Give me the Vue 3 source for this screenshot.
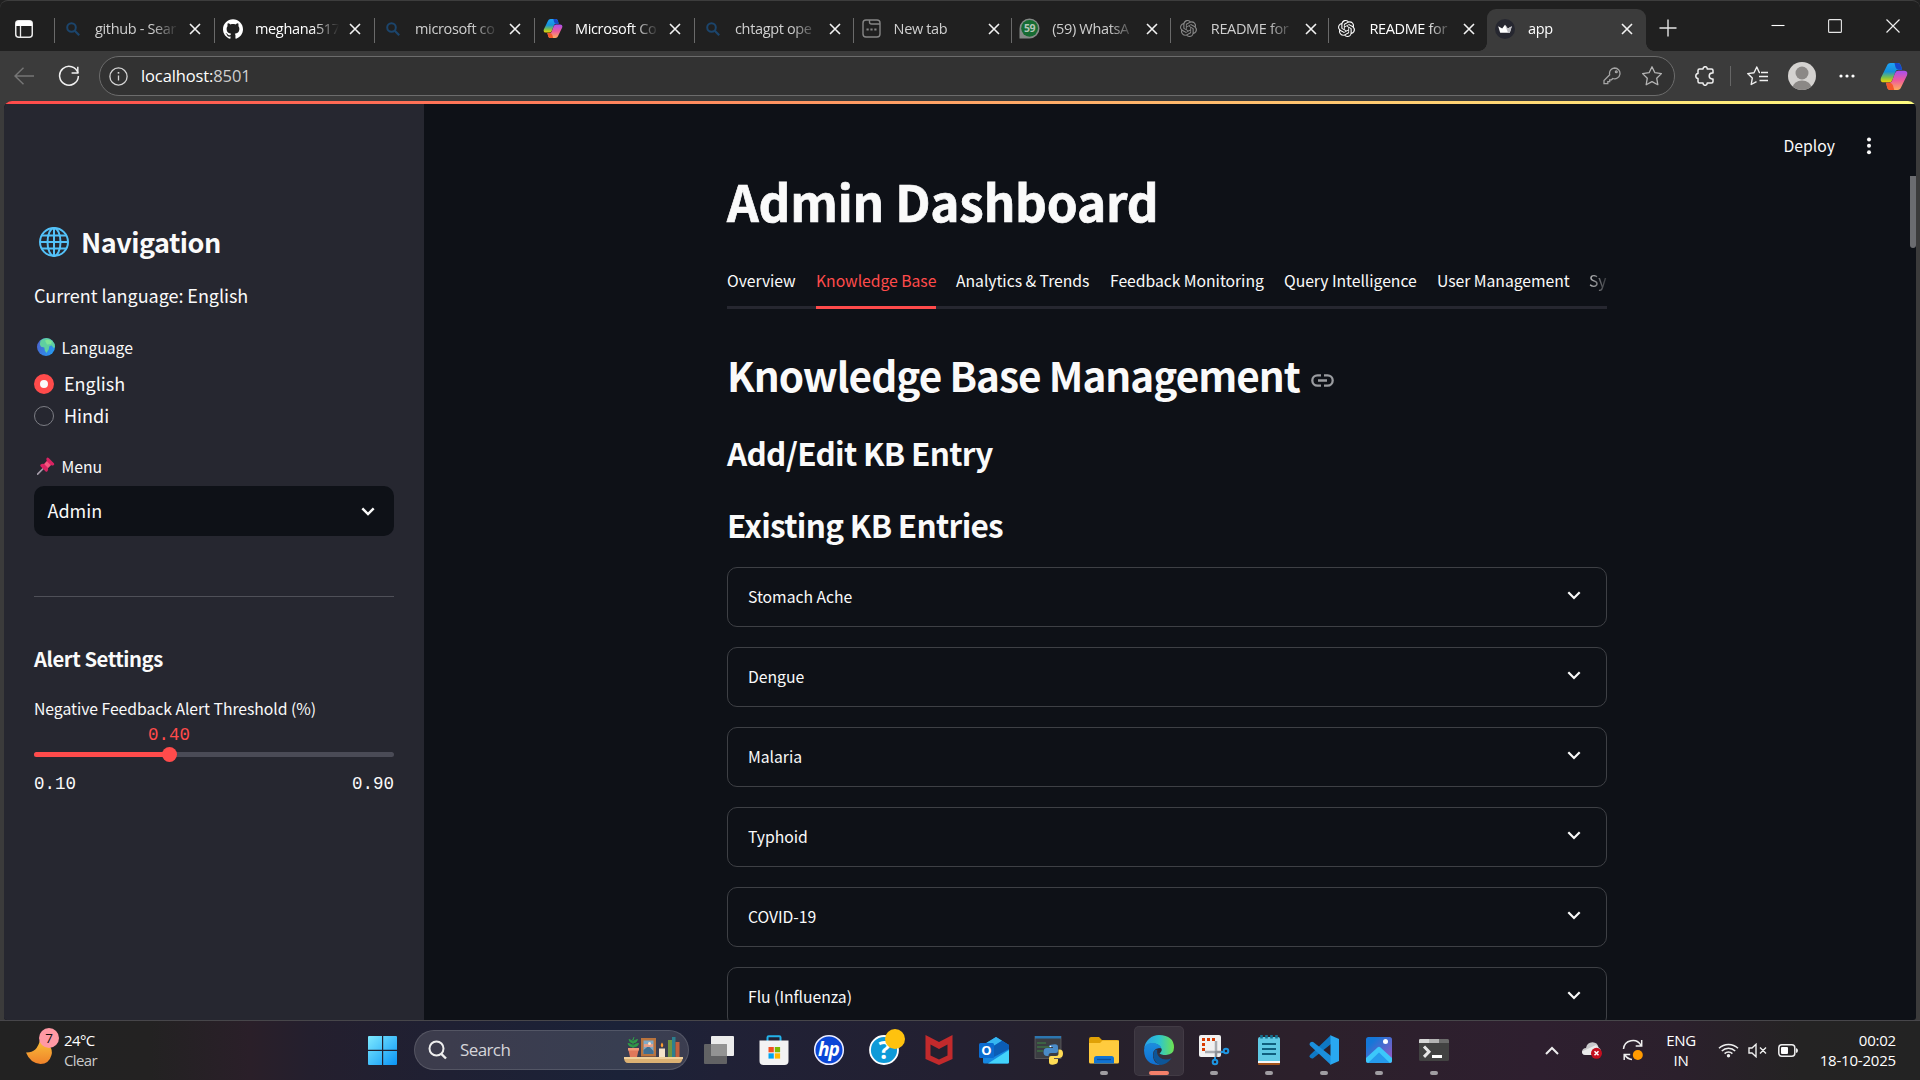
<script setup>
const tabs = [
  { icon: 'search', title: 'github - Sear' },
  { icon: 'github', title: 'meghana517', bright: true },
  { icon: 'search', title: 'microsoft co' },
  { icon: 'copilot', title: 'Microsoft Co', bright: true },
  { icon: 'search', title: 'chtagpt ope' },
  { icon: 'newtab', title: 'New tab' },
  { icon: 'whatsapp', title: '(59) WhatsA' },
  { icon: 'openai', title: 'README for', dim: true },
  { icon: 'openai', title: 'README for', bright: true },
  { icon: 'crown', title: 'app', bright: true, active: true },
]

const pageTabs = [
  { label: 'Overview', width: 69 },
  { label: 'Knowledge Base', width: 120, active: true },
  { label: 'Analytics & Trends', width: 134 },
  { label: 'Feedback Monitoring', width: 154 },
  { label: 'Query Intelligence', width: 133 },
  { label: 'User Management', width: 132 },
  { label: 'Sy', width: 18, faded: true },
]

const entries = ['Stomach Ache', 'Dengue', 'Malaria', 'Typhoid', 'COVID-19', 'Flu (Influenza)']

const apps = [
  { id: 'taskview' },
  { id: 'store' },
  { id: 'hp' },
  { id: 'help' },
  { id: 'mcafee' },
  { id: 'outlook' },
  { id: 'python' },
  { id: 'folder', running: true },
  { id: 'edge', running: true, active: true },
  { id: 'snip', running: true },
  { id: 'notepad', running: true },
  { id: 'vscode', running: true },
  { id: 'photos', running: true },
  { id: 'terminal', running: true },
]

const slider = { min: 0.1, max: 0.9, value: 0.4 }
const percent = ((slider.value - slider.min) / (slider.max - slider.min)) * 100
</script>

<template>
  <div class="screen">
    <svg class="defs" width="0" height="0">
      <defs>
        <linearGradient id="cpA" x1="0" y1="0" x2="0" y2="1">
          <stop offset="0" stop-color="#1fa3f5" /><stop offset=".45" stop-color="#1590dc" />
          <stop offset=".75" stop-color="#7cc04b" /><stop offset="1" stop-color="#f5d400" />
        </linearGradient>
        <linearGradient id="cpB" x1="0" y1="0" x2="0" y2="1">
          <stop offset="0" stop-color="#a64ff0" /><stop offset=".5" stop-color="#ee5a9b" /><stop offset="1" stop-color="#ffae5c" />
        </linearGradient>
        <linearGradient id="winG" x1="0" y1="0" x2="1" y2="1">
          <stop offset="0" stop-color="#7eeaff" /><stop offset="1" stop-color="#0a94f5" />
        </linearGradient>
        <symbol id="copilot" viewBox="0 0 28 28">
          <path d="M6.500 3Q7.500 0 10.500 0H18q2.500 0 3.300 3l1 4h-3.800q-2.500 0-3.200 2.500L12.500 17Q11.500 20 9 20H3.500Q-1 20 .6 15z" fill="url(#cpA)" />
          <path d="M14.500 0H18q2.500 0 3.300 3l1.200 4h-4Q16.500 7 15.600 4.500z" fill="#1746c9" />
          <path d="M21.500 25Q20.500 28 17.500 28H10q-2.500 0-3.200-3L5.800 20.500H9.500q2 0 2.800-2.500L15 10.500Q16 8 18.500 8h6Q29 8 27.400 13z" fill="url(#cpB)" />
          <path d="M5.800 20.500H9q3 0 4 3.200l1.300 4.300H10q-2.500 0-3.200-3z" fill="#f4572b" />
        </symbol>
        <symbol id="openai" viewBox="0 0 24 24">
          <path fill="currentColor" d="M22.2819 9.8211a5.9847 5.9847 0 0 0-.5157-4.9108 6.0462 6.0462 0 0 0-6.5098-2.9A6.0651 6.0651 0 0 0 4.9807 4.1818a5.9847 5.9847 0 0 0-3.9977 2.9 6.0462 6.0462 0 0 0 .7427 7.0966 5.98 5.98 0 0 0 .511 4.9107 6.051 6.051 0 0 0 6.5146 2.9001A5.9847 5.9847 0 0 0 13.2599 24a6.0557 6.0557 0 0 0 5.7718-4.2058 5.9894 5.9894 0 0 0 3.9977-2.9001 6.0557 6.0557 0 0 0-.7475-7.0729zm-9.022 12.6081a4.4755 4.4755 0 0 1-2.8764-1.0408l.1419-.0804 4.7783-2.7582a.7948.7948 0 0 0 .3927-.6813v-6.7369l2.02 1.1686a.071.071 0 0 1 .038.052v5.5826a4.504 4.504 0 0 1-4.4945 4.4944zm-9.6607-4.1254a4.4708 4.4708 0 0 1-.5346-3.0137l.142.0852 4.783 2.7582a.7712.7712 0 0 0 .7806 0l5.8428-3.3685v2.3324a.0804.0804 0 0 1-.0332.0615L9.74 19.9502a4.4992 4.4992 0 0 1-6.1408-1.6464zM2.3408 7.8956a4.485 4.485 0 0 1 2.3655-1.9728V11.6a.7664.7664 0 0 0 .3879.6765l5.8144 3.3543-2.0201 1.1685a.0757.0757 0 0 1-.071 0l-4.8303-2.7865A4.504 4.504 0 0 1 2.3408 7.872zm16.5963 3.8558L13.1038 8.364 15.1192 7.2a.0757.0757 0 0 1 .071 0l4.8303 2.7913a4.4944 4.4944 0 0 1-.6765 8.1042v-5.6772a.79.79 0 0 0-.407-.667zm2.0107-3.0231l-.142-.0852-4.7735-2.7818a.7759.7759 0 0 0-.7854 0L9.409 9.2297V6.8974a.0662.0662 0 0 1 .0284-.0615l4.8303-2.7866a4.4992 4.4992 0 0 1 6.6802 4.66zM8.3065 12.863l-2.02-1.1638a.0804.0804 0 0 1-.038-.0567V6.0742a4.4992 4.4992 0 0 1 7.3757-3.4537l-.142.0805L8.704 5.459a.7948.7948 0 0 0-.3927.6813zm1.0976-2.3654l2.602-1.4998 2.6069 1.4998v2.9994l-2.5974 1.4997-2.6067-1.4997Z" />
        </symbol>
      </defs>
    </svg>

    <div class="tabstrip">
      <div class="tab-actions">
        <svg width="18" height="18" viewBox="0 0 18 18"><rect x=".75" y=".75" width="16.500" height="16.500" rx="3" fill="none" stroke="#e8e8e8" stroke-width="1.500" /><path d="M1 3q0-2 2-2h12q2 0 2 2v3H1z" fill="#fff" /><path d="M5.500 6v11" stroke="#e8e8e8" stroke-width="1.300" /></svg>
      </div>
      <div v-for="(t, i) in tabs" :key="i" class="tab" :class="{ active: t.active, bright: t.bright, dim: t.dim }">
        <span class="fav">
          <svg v-if="t.icon === 'search'" width="14" height="14" viewBox="0 0 14 14"><circle cx="5.500" cy="5.500" r="4.300" fill="none" stroke="#1c456c" stroke-width="2" /><path d="M8.700 8.700l4.500 4.500" stroke="#1c456c" stroke-width="2.200" /></svg>
          <svg v-else-if="t.icon === 'github'" width="20" height="20" viewBox="0 0 24 24"><path fill="#fff" d="M12 .297c-6.630 0-12 5.373-12 12 0 5.303 3.438 9.800 8.205 11.385.6.113.82-.258.82-.577 0-.285-.01-1.040-.015-2.040-3.338.724-4.042-1.610-4.042-1.610C4.422 18.070 3.633 17.700 3.633 17.700c-1.087-.744.084-.729.084-.729 1.205.084 1.838 1.236 1.838 1.236 1.070 1.835 2.809 1.305 3.495.998.108-.776.417-1.305.76-1.605-2.665-.3-5.466-1.332-5.466-5.930 0-1.310.465-2.380 1.235-3.220-.135-.303-.54-1.523.105-3.176 0 0 1.005-.322 3.300 1.230.96-.267 1.980-.399 3-.405 1.020.006 2.040.138 3 .405 2.280-1.552 3.285-1.230 3.285-1.230.645 1.653.24 2.873.12 3.176.765.84 1.230 1.910 1.230 3.220 0 4.610-2.805 5.625-5.475 5.920.42.36.81 1.096.81 2.220 0 1.606-.015 2.896-.015 3.286 0 .315.21.69.825.57C20.565 22.092 24 17.592 24 12.297c0-6.627-5.373-12-12-12" /></svg>
          <svg v-else-if="t.icon === 'copilot'" width="20" height="19"><use href="#copilot" /></svg>
          <svg v-else-if="t.icon === 'newtab'" width="19" height="19" viewBox="0 0 19 19" fill="none" stroke="#858585" stroke-width="1.400"><rect x="1" y="1" width="17" height="17" rx="3" /><path d="M7.500 1v2q0 2 2 2H18" /><path d="M4.500 10.500h2.200M8.400 10.500h2.200M12.300 10.500h2.200" stroke-width="2" /></svg>
          <svg v-else-if="t.icon === 'whatsapp'" width="21" height="21" viewBox="0 0 21 21"><path d="M.5 20.500V10.500A10 10 0 1 1 10.500 20.500z" fill="#858a87" /><circle cx="10.600" cy="10.300" r="8.400" fill="#166b32" /><text x="10.600" y="14.200" text-anchor="middle" class="badge59">59</text></svg>
          <svg v-else-if="t.icon === 'openai'" width="17" height="17" class="ai"><use href="#openai" /></svg>
          <svg v-else width="20" height="20" viewBox="0 0 20 20"><circle cx="10" cy="10" r="10" fill="#262730" /><path d="M3.200 7.200l4 2.300L10 5.800l2.800 3.700 4-2.300-2 6.600H5.200z" fill="#fff" /><path d="M10 5.800l2.800 3.700 4-2.300-2 6.600H13z" fill="#bfbfc4" /></svg>
        </span>
        <span class="tab-title">{{ t.title }}</span>
        <svg class="tab-x" width="12" height="12" viewBox="0 0 12 12"><path d="M1 1l10 10M11 1L1 11" stroke="#f2f2f2" stroke-width="1.600" /></svg>
      </div>
      <div class="plus"><svg width="18" height="18" viewBox="0 0 18 18"><path d="M9 .5v17M.5 9h17" stroke="#e4e4e4" stroke-width="1.400" /></svg></div>
      <div class="winctl">
        <svg width="14" height="14" viewBox="0 0 14 14"><path d="M.5 6.500h13" stroke="#fff" stroke-width="1.100" /></svg>
        <svg width="14" height="14" viewBox="0 0 14 14"><rect x=".6" y=".6" width="12.800" height="12.800" rx="1" fill="none" stroke="#e6e6e6" stroke-width="1.100" /></svg>
        <svg width="14" height="14" viewBox="0 0 14 14"><path d="M.5.5l13 13M13.500.5l-13 13" stroke="#eee" stroke-width="1.200" /></svg>
      </div>
    </div>

    <div class="toolbar">
      <svg class="back" width="20" height="18" viewBox="0 0 20 18" fill="none" stroke="#767676" stroke-width="1.400"><path d="M20 9H1M9.500.7L1 9l8.500 8.300" /></svg>
      <svg class="reload" width="22" height="22" viewBox="0 0 22 22" fill="none" stroke="#f0f0f0" stroke-width="1.500"><path d="M20 8A9.400 9.400 0 1 0 20.400 11" /><path d="M19.800 1.800V8h-6.200" /></svg>
      <div class="address">
        <svg width="19" height="19" viewBox="0 0 19 19" fill="none" stroke="#d5d5d5" stroke-width="1.300"><circle cx="9.500" cy="9.500" r="8.600" /><path d="M9.500 8.500v5" /><path d="M9.500 5v1.700" stroke-width="1.600" /></svg>
        <span class="url">localhost:<i>8501</i></span>
        <svg width="18" height="18" viewBox="0 0 18 18" fill="none" stroke="#a5a5a5" stroke-width="1.300"><path d="M11.600 1a5.400 5.400 0 1 1-1.800 10.500L8.500 12.800H6.700v1.900H4.800v2H1v-3.200l5.700-5.700A5.400 5.400 0 0 1 11.600 1z" /><circle cx="13.300" cy="4.800" r=".9" /></svg>
        <svg class="star" width="20" height="20" viewBox="0 0 20 20" fill="none" stroke="#b5b5b5" stroke-width="1.300" stroke-linejoin="round"><path d="M10 .8l2.900 5.900 6.500.9-4.700 4.600 1.100 6.500L10 15.600l-5.800 3.100 1.100-6.500L.6 7.600l6.500-.9z" /></svg>
      </div>
      <div class="tools">
        <svg width="20" height="20" viewBox="0 0 20 20" fill="none" stroke="#f0f0f0" stroke-width="1.500" stroke-linejoin="round"><path d="M4.500 3H8q0-2.300 2.100-2.300T12.200 3h4.300q1.500 0 1.500 1.500V7h-1q-2.800.3-2.800 3t2.800 3h1v2.500q0 1.500-1.500 1.500h-4.300q0 2.300-2.100 2.300T8 17H4.500Q3 17 3 15.500v-3Q.8 12.300.8 10T3 7.500v-3Q3 3 4.500 3z" /></svg>
        <i class="vsep"></i>
        <svg class="favs" width="21" height="20" viewBox="0 0 21 20" fill="none" stroke="#f0f0f0" stroke-width="1.400" stroke-linejoin="round"><path d="M13 6.500h-.7L9.800 1 7 6.700l-6.300.9 4.600 4.500-1.100 6.400 5.300-2.900" /><path d="M14 6.500h7M12 10.500h9M12.500 14.500h8.500" /></svg>
        <svg class="avatar" width="28" height="28" viewBox="0 0 28 28"><defs><clipPath id="av"><circle cx="14" cy="14" r="14" /></clipPath></defs><g clip-path="url(#av)"><rect width="28" height="28" fill="#d4d2d0" /><circle cx="14" cy="11" r="6.500" fill="#8b8886" /><ellipse cx="14" cy="26" rx="9.500" ry="7.500" fill="#8b8886" /></g></svg>
        <svg class="more" width="16" height="4" viewBox="0 0 16 4" fill="#fff"><circle cx="2" cy="2" r="1.600" /><circle cx="8" cy="2" r="1.600" /><circle cx="14" cy="2" r="1.600" /></svg>
        <svg class="cp" width="28" height="27"><use href="#copilot" /></svg>
      </div>
    </div>

    <div class="page-frame">
      <div class="page">
        <div class="rainbow"></div>
        <div class="columns">
          <aside class="sidebar">
            <h2 class="nav-title">
              <svg width="40" height="32" viewBox="0 0 40 32" fill="none" stroke="#53c1f8" stroke-width="2"><circle cx="20" cy="16" r="14" /><ellipse cx="20" cy="16" rx="6.500" ry="14" /><path d="M20 2v28M6 16h28M8 9.500h24M8 22.500h24" /></svg>
              <span>Navigation</span>
            </h2>
            <p class="current">Current language: English</p>
            <div class="label lang">
              <svg width="18" height="18" viewBox="0 0 18 18"><defs><linearGradient id="sea" x1="0" y1=".3" x2="1" y2=".8"><stop offset="0" stop-color="#4a63cf" /><stop offset="1" stop-color="#249df2" /></linearGradient></defs><circle cx="9" cy="9" r="9" fill="url(#sea)" /><path d="M3.500 2.600Q6 0 9.500 0q3.500.2 5.800 2.600Q18 5.500 18 9l-1.500 1-1.700-2.500-2.300.5-.8 3.500L9.500 15l-1.600-2.200L7.300 9.500 4 8.800 2.800 6.500z" fill="#5fd0a0" /><path d="M8 2.500l3-1 4 2-1 2.500-4 .5z" fill="#7fe596" /></svg>
              <span>Language</span>
            </div>
            <div class="radio"><i class="dot on"></i><span>English</span></div>
            <div class="radio"><i class="dot"></i><span>Hindi</span></div>
            <div class="label menu">
              <svg width="18" height="18" viewBox="0 0 18 18"><path d="M.6 17.200L7.200 10.500" stroke="#a49ba8" stroke-width="1.700" stroke-linecap="round" /><path d="M9.500 1.200q1-1.200 2.200-.2l5.200 5.200q1 1.200-.3 2-1.600.6-2.900-.1L11 11q.6 2.200-.8 3.600-.8.500-1.600-.2L3.500 9.200q-.7-1 .2-1.700 1.500-1.200 3.500-.6l2.700-2.800q-.9-1.600-.4-2.900z" fill="#d92362" /><path d="M9.800 4.200l4 4L11 11 7.200 7z" fill="#f4567e" /></svg>
              <span>Menu</span>
            </div>
            <div class="select">
              <span>Admin</span>
              <svg width="14" height="9" viewBox="0 0 14 9" fill="none" stroke="#fafafa" stroke-width="2.400"><path d="M1.300 1.300L7 7l5.700-5.700" /></svg>
            </div>
            <hr class="rule">
            <h3 class="alert-title">Alert Settings</h3>
            <p class="threshold">Negative Feedback Alert Threshold (%)</p>
            <div class="value-row"><span class="value" :style="{ marginLeft: percent + '%' }">{{ slider.value.toFixed(2) }}</span></div>
            <div class="track"><i class="fill" :style="{ width: percent + '%' }"></i><i class="thumb"></i></div>
            <div class="range"><span>{{ slider.min.toFixed(2) }}</span><span>{{ slider.max.toFixed(2) }}</span></div>
          </aside>

          <main class="main">
            <header class="app-header">
              <span class="deploy">Deploy</span>
              <svg width="6" height="18" viewBox="0 0 6 18" fill="#fafafa"><circle cx="3" cy="2.400" r="2" /><circle cx="3" cy="8.800" r="2" /><circle cx="3" cy="15.200" r="2" /></svg>
            </header>
            <div class="content">
              <h1>Admin Dashboard</h1>
              <nav class="page-tabs">
                <span v-for="p in pageTabs" :key="p.label" class="page-tab" :class="{ active: p.active, faded: p.faded }" :style="{ width: p.width + 'px' }">{{ p.label }}</span>
              </nav>
              <h2 class="kb-title"><span>Knowledge Base Management</span>
                <svg width="23" height="13" viewBox="0 0 23 13" fill="none" stroke="#9a9ca0" stroke-width="2.300"><path d="M10 1.300H6.500a5.200 5.200 0 0 0 0 10.400H10M13 1.300h3.500a5.200 5.200 0 0 1 0 10.400H13M7 6.500h9" /></svg>
              </h2>
              <h3 class="sub add">Add/Edit KB Entry</h3>
              <h3 class="sub existing">Existing KB Entries</h3>
              <div class="list">
                <div v-for="e in entries" :key="e" class="expander">
                  <span>{{ e }}</span>
                  <svg width="14" height="9" viewBox="0 0 14 9" fill="none" stroke="#fafafa" stroke-width="2.200"><path d="M1.300 1.300L7 7l5.700-5.700" /></svg>
                </div>
              </div>
            </div>
            <i class="scroll-thumb"></i>
          </main>
        </div>
      </div>
    </div>

    <footer class="taskbar">
      <div class="weather">
        <div class="moon">
          <svg width="32" height="36" viewBox="0 0 32 36"><defs><linearGradient id="moonG" x1="0" y1="0" x2="0" y2="1"><stop offset="0" stop-color="#f9c03a" /><stop offset="1" stop-color="#f0822a" /></linearGradient></defs><path d="M0 21.500Q11 22 14 9q14 5 11.500 15Q23 33 14.500 33 4 32 0 21.500z" fill="url(#moonG)" /></svg>
          <span class="count">7</span>
        </div>
        <div class="temps"><span>24°C</span><span class="soft">Clear</span></div>
      </div>
      <svg class="start" width="29" height="29" viewBox="0 0 29 29" fill="url(#winG)"><path d="M1 0h13v13.800H0V1q0-1 1-1zM15.200 0H28q1 0 1 1v12.800H15.200zM0 15h14v14H1q-1 0-1-1zM15.200 15H29v13q0 1-1 1H15.200z" /></svg>
      <div class="search">
        <svg width="20" height="20" viewBox="0 0 20 20" fill="none" stroke="#eee" stroke-width="2"><circle cx="8.500" cy="8.500" r="7" /><path d="M13.300 13.800l4.700 4.700" stroke-width="2.400" /></svg>
        <span>Search</span>
        <svg class="shelf" width="59" height="27" viewBox="0 0 59 27">
          <path d="M0 20h59q-1 6-4 6H4q-4 0-4-6z" fill="#dcb173" /><path d="M0 20h59v2H0z" fill="#f0d09a" />
          <path d="M4 11h11l-2 9H6z" fill="#e0785a" /><path d="M4 11h11v2.500H4z" fill="#f09a78" />
          <path d="M9 11V2M9 10Q4.500 9.500 4 6.500q4 0 5 3.500zM9 10q5-.5 5.500-3.500-4.500 0-5.500 3.500zM9 6Q5.500 5.500 5 2.500q3.500.5 4 3.500zM9 6q4-.5 4.500-3.500Q9.500 3 9 6zM9 3l1-3" stroke="#2f9a48" fill="#2f9a48" />
          <rect x="17" y="1" width="15" height="18.500" fill="#b9743e" /><rect x="19.500" y="3.500" width="10" height="13.500" fill="#7faac8" /><path d="M19.500 13l5-4 5 5v3h-10z" fill="#3f6f92" /><path d="M20 7h9v3h-9z" fill="#e4a18c" /><circle cx="25.500" cy="6.500" r="1.500" fill="#ffe3c8" />
          <rect x="35" y="11.500" width="6" height="8.500" fill="#f5e3c8" /><path d="M38 5.500q2.500 3 0 5-2.500-2 0-5z" fill="#ff9f2e" />
          <rect x="44" y="3" width="4" height="17" fill="#6f9440" /><rect x="48" y="0" width="3.500" height="20" fill="#2c7f8e" /><rect x="51.500" y="5" width="4" height="15" fill="#c2603c" />
        </svg>
      </div>
      <div class="apps">
        <div v-for="a in apps" :key="a.id" class="app" :class="{ active: a.active }">
          <svg width="32" height="32" viewBox="0 0 32 32">
            <template v-if="a.id === 'taskview'"><rect x="8" y="2" width="23" height="20" rx="1" fill="#ececec" /><rect x="1" y="10" width="23" height="20" rx="1" fill="#6b6b6b" opacity=".88" /><path d="M8 10h16v12H8z" fill="#9b9b9b" opacity=".75" /></template>
            <template v-else-if="a.id === 'store'"><path d="M9.500 7V3.500q0-1.200 1.200-1.200h10.600q1.200 0 1.200 1.200V7" fill="none" stroke="#23b2ea" stroke-width="2" /><path d="M1.500 6.500h29V27q0 4-4 4h-21q-4 0-4-4z" fill="#f3f3f3" /><path d="M10.500 13h5.300v5.300h-5.300z" fill="#f25022" /><path d="M16.800 13h5.300v5.300h-5.300z" fill="#7fba00" /><path d="M10.500 19.300h5.300v5.300h-5.300z" fill="#00a4ef" /><path d="M16.800 19.300h5.300v5.300h-5.300z" fill="#ffb900" /></template>
            <template v-else-if="a.id === 'hp'"><circle cx="16" cy="16" r="14.300" fill="#0b46d6" stroke="#eef" stroke-width="1.500" /><text x="15.500" y="21.500" text-anchor="middle" class="hp-text">hp</text></template>
            <template v-else-if="a.id === 'help'"><circle cx="16" cy="16" r="14" fill="#0e9ad8" stroke="#fff" stroke-width="1.800" /><text x="16.500" y="25" text-anchor="middle" class="help-text">?</text><circle cx="27" cy="5" r="10" fill="#ffc20e" /></template>
            <template v-else-if="a.id === 'mcafee'"><path d="M2.500 1L16 8 29.500 1v24L16 31 2.500 25z" fill="#c22a2c" /><path d="M7.500 10.500L16 15l8.500-4.500v11L16 25.500l-8.500-4z" fill="#23202f" /></template>
            <template v-else-if="a.id === 'outlook'"><path d="M5 11L18 3l13 8v17q0 1.500-1.500 1.500h-23Q5 29.500 5 28z" fill="#1587e0" /><path d="M5 11L18 3l6 3.700L9 16z" fill="#35b6f1" /><path d="M24 6.700l7 4.300v4L14 24l-5-8z" fill="#0b5cb5" /><path d="M31 14v14q0 1.500-1.500 1.500H10L31 16z" fill="#43d3fb" /><rect x="1" y="9" width="15" height="15" rx="1.500" fill="#0b6bd0" /><text x="8.500" y="21.300" text-anchor="middle" class="o-text">O</text></template>
            <template v-else-if="a.id === 'python'"><rect x="2" y="2.500" width="26" height="22" fill="#3b3d42" stroke="#666" stroke-width=".7" /><path d="M2 2h26v2.500H2z" fill="#2c76b0" /><path d="M4 9h9M4 13h13M4 17h6" stroke="#3f8a45" stroke-width="1.200" /><path d="M20 10.500q5-1 5 2.500v4q0 2-2 2h-5q-2.500 0-2.500 2.500V22h-1.500q-3.500 0-3.500-4t3.500-4H20v-1h-4v-1q0-1.300 4-1.500z" fill="#4a8cc7" /><path d="M21 30.500q-5 1-5-2.500v-4q0-2 2-2h5q2.500 0 2.500-2.500V15.500h1q3.500 0 3.500 4t-3.500 4.500H21v1h4v2q0 3-4 3.500z" fill="#ffdc55" /><circle cx="17.500" cy="12.500" r=".8" fill="#fff" /></template>
            <template v-else-if="a.id === 'folder'"><path d="M1 5q0-2 2-2h8l3 3h15q2 0 2 2v5H1z" fill="#e0a106" /><path d="M1 9h11l2.500-2.500H31V28q0 1.500-1.500 1.500h-27Q1 29.500 1 28z" fill="#ffcb3e" /><path d="M6 29.500v-5Q6 22 8.500 22h15q2.500 0 2.500 2.500v5z" fill="#1173d2" /><path d="M9 25.500h14" stroke="#0a4f9c" stroke-width="1.300" /></template>
            <template v-else-if="a.id === 'edge'">
              <defs>
                <linearGradient id="eA" x1="0" y1=".5" x2="1" y2=".5"><stop offset="0" stop-color="#2aa0e8" /><stop offset=".5" stop-color="#2dc5d0" /><stop offset="1" stop-color="#6fe34f" /></linearGradient>
                <linearGradient id="eB" x1="0" y1="0" x2="0" y2="1"><stop offset="0" stop-color="#1c8ddd" /><stop offset="1" stop-color="#0f6fd2" /></linearGradient>
              </defs>
              <path d="M1.200 14A15 15 0 0 1 16 1q15 .5 15 12.500 0 7-8 7.500-5.500 0-6.500-1.800 2.500-1.700 1.800-4.700-2-5-9-5Q4 9.600 1.200 14z" fill="url(#eA)" />
              <path d="M1 16q.3-7 8-7 7.500 0 9.500 5.500-5.500-1.500-8 3-2 6 2 11l5 2.500Q1.500 31.500 1 16z" fill="url(#eB)" />
              <path d="M12 16q-4 6 1 12 2 2.700 5 3 6-.5 10.500-6.700-7 3-12-1Q13 20 14.500 15.800z" fill="#0d5597" />
              <path d="M14.500 15q3-1.500 4 0 .7 2.300-1.800 4.300-2.700-.8-2.200-4.300z" fill="#2d2b3a" />
            </template>
            <template v-else-if="a.id === 'snip'"><rect x="1" y="1" width="22" height="22" rx="2" fill="#f1f1f1" /><path d="M17 5.500H5.500V17" fill="none" stroke="#d83b01" stroke-width="3" stroke-dasharray="3 2" /><path d="M18 7v11H7" fill="none" stroke="#a9adb2" stroke-width="2.500" /><path d="M18 17v6M18 18h6" stroke="#8c9096" stroke-width="2.500" /><circle cx="17" cy="28" r="2.300" fill="none" stroke="#1d96e2" stroke-width="2" /><circle cx="28" cy="17" r="2.300" fill="none" stroke="#1d96e2" stroke-width="2" /><path d="M17 26v-3M26 18h-3" stroke="#1d96e2" stroke-width="2" /></template>
            <template v-else-if="a.id === 'notepad'"><path d="M5 28h22v2q0 1-1 1H6q-1 0-1-1z" fill="#a4541a" /><path d="M5 27h22v2H5z" fill="#f7f7f7" /><path d="M5 5q0-2 2-2h18q2 0 2 2v22H5z" fill="#5fc9e4" /><path d="M9 10h14M9 15h14M9 20h14" stroke="#0f5f7e" stroke-width="1.800" /><path d="M8.500 1v3.500M13.500 1v3.500M18.500 1v3.500M23.500 1v3.500" stroke="#15708f" stroke-width="2.600" /></template>
            <template v-else-if="a.id === 'vscode'"><path d="M23 1L2 21q-1.500 1.600.3 2.800 1.800 1.400 3.200.2L23 10z" fill="#0f78c4" /><path d="M23 31L2 11.500Q.7 10 2.300 8.500 4 7 5.500 8.200L23 22z" fill="#1b8fdc" /><path d="M22.500 1.200L31 5v22l-8.500 3.800z" fill="#29a8f0" /></template>
            <template v-else-if="a.id === 'photos'"><defs><linearGradient id="phG" x1="0" y1="0" x2="1" y2="1"><stop offset=".2" stop-color="#1577d8" /><stop offset="1" stop-color="#a455c0" /></linearGradient><clipPath id="phC"><rect x="3" y="3" width="26" height="26" rx="2.500" /></clipPath></defs><g clip-path="url(#phC)"><rect x="3" y="3" width="26" height="26" fill="url(#phG)" /><path d="M2 25l12.500-11.500q1.500-1.300 3 0L30 25v5H2z" fill="#3cc8fb" /><path d="M4 30l12-11.500L28 30z" fill="#1c86e6" opacity=".7" /></g><circle cx="22.500" cy="7.500" r="2.500" fill="#fff" /></template>
            <template v-else><rect x="1" y="5" width="30" height="22" rx="1.500" fill="#424242" /><path d="M1 6.500Q1 5 2.500 5H21v4H1z" fill="#b3b3b3" /><path d="M1 6.500Q1 5 2.500 5H11v4H1z" fill="#d6d6d6" /><path d="M21 5h8.500Q31 5 31 6.500V9H21z" fill="#6b6b6b" /><path d="M6 12.500l5 5.200-5 5.200" fill="none" stroke="#e6e6e6" stroke-width="3" /><path d="M14 22.500h10" stroke="#fff" stroke-width="3" /></template>
          </svg>
          <i v-if="a.running" class="run"></i>
        </div>
      </div>
      <div class="tray">
        <svg class="up" width="14" height="9" viewBox="0 0 14 9" fill="none" stroke="#eee" stroke-width="2"><path d="M1 8l6-6 6 6" /></svg>
        <svg class="cloud" width="22" height="18" viewBox="0 0 22 18"><path d="M5 14Q1 14 1 10.500 1.500 7 5 7 6 1.500 11.500 1.300q5 .2 6 5Q20 7.500 20 11q0 3-3 3z" fill="#c9c9cb" /><path d="M5 14Q1 14 1 10.500L15 4q3 2 3 5L12 14z" fill="#ebebeb" /><circle cx="15.500" cy="12.300" r="5.500" fill="#c50f1f" /><path d="M13.500 10.300l4 4M17.500 10.300l-4 4" stroke="#fff" stroke-width="1.500" /></svg>
        <svg class="sync" width="22" height="22" viewBox="0 0 22 22" fill="none" stroke="#eee" stroke-width="1.500"><path d="M1.500 10A9.300 9.300 0 0 1 19 6.500M19.700 1v6h-6M10 20.500A9.300 9.300 0 0 1 3 16M2.200 21v-5.500h6" /><circle cx="15.800" cy="16" r="5" fill="#ff9a00" stroke="none" /></svg>
        <div class="lang-ind"><span>ENG</span><span>IN</span></div>
        <svg class="wifi" width="21" height="16" viewBox="0 0 21 16" fill="none" stroke="#eee" stroke-width="1.500"><path d="M1 6.300a13.500 13.500 0 0 1 19 0M3.800 9a9.500 9.500 0 0 1 13.400 0M6.600 11.600a5.600 5.600 0 0 1 7.800 0" /><circle cx="10.500" cy="13.800" r="1.700" fill="#eee" stroke="none" /></svg>
        <svg class="vol" width="19" height="15" viewBox="0 0 19 15" fill="none" stroke="#eee" stroke-width="1.400"><path d="M1 5h3l4-3.700v12.400L4 10H1zM12 4.500l6 6M18 4.500l-6 6" /></svg>
        <svg class="batt" width="20" height="13" viewBox="0 0 20 13"><rect x=".8" y=".8" width="16" height="11.400" rx="3" fill="none" stroke="#eee" stroke-width="1.500" /><rect x="3" y="3" width="7" height="7" rx="1" fill="#fff" /><path d="M18 4q2 .5 2 2.500T18 9z" fill="#eee" /></svg>
        <div class="clock"><span>00:02</span><span>18-10-2025</span></div>
      </div>
    </footer>
  </div>
</template>

<style>
body { background: #202020; overflow: hidden; }
</style>

<style scoped>
* { box-sizing: border-box; }
h1, h2, h3, p { margin: 0; font-weight: 700; }
i { font-style: normal; }
svg { display: block; flex: none; }
.defs { position: absolute; }
.screen {
  width: 1920px; height: 1080px; display: flex; flex-direction: column; overflow: hidden;
  background: #202020; font-family: "Open Sans", "Noto Sans", sans-serif; color: #fff;
}

.tabstrip { height: 51px; display: flex; align-items: flex-start; background: #202020; border-top: 1px solid #3d3d3d; border-radius: 8px 8px 0 0; }
.tab-actions { width: 54px; flex: none; padding: 19px 0 0 15px; }
.tab { width: 158.6px; height: 50px; flex: none; position: relative; display: flex; align-items: center; padding: 5px 0 0 8px; }
.tab:nth-child(-n+5) { width: 160px; }
.tab::before { content: ""; position: absolute; left: 0; top: 17px; width: 1px; height: 25px; background: #6a6a6a; }
.fav { width: 21px; flex: none; display: flex; justify-content: center; margin-right: 12px; }
.tab-title {
  width: 84px; flex: none; white-space: nowrap; font-size: 14.5px; line-height: 22px; letter-spacing: -.35px; color: #cfcfcf;
  -webkit-mask-image: linear-gradient(90deg, #000 68%, transparent 100%); mask-image: linear-gradient(90deg, #000 68%, transparent 100%);
}
.bright .tab-title { color: #fff; }
.tab-x { margin-left: 10px; }
.ai { color: #fff; }
.dim .ai { color: #8a8a8a; }
.badge59 { font: 700 10.5px "Open Sans", sans-serif; fill: #b3c4b8; letter-spacing: -.3px; }
.tab.active { width: 159px; height: 42px; margin-top: 8px; padding-top: 0; padding-bottom: 3px; background: #3b3b3b; border-radius: 9px 9px 0 0; }
.tab.active .tab-x { margin-left: 9px; }
.tab.active::before { left: -8px; top: auto; bottom: 0; width: 8px; height: 8px; background: radial-gradient(circle at 0 0, transparent 7.5px, #3b3b3b 8px); }
.tab.active::after { content: ""; position: absolute; right: -8px; bottom: 0; width: 8px; height: 8px; background: radial-gradient(circle at 100% 0, transparent 7.5px, #3b3b3b 8px); }
.plus { padding: 18px 0 0 13px; }
.winctl { margin-left: auto; display: flex; gap: 43.5px; padding: 18px 20.5px 0 0; }

.toolbar { height: 50px; display: flex; align-items: center; background: #3b3b3b; padding-left: 14px; }
.reload { margin-left: 24px; }
.address { width: 1576px; height: 40px; margin-left: 19px; border: 1px solid #6c6c6c; border-radius: 20px; background: #323232; display: flex; align-items: center; padding: 0 12px 0 9px; }
.url { margin-left: 13px; margin-right: auto; font-size: 16.5px; letter-spacing: -.12px; line-height: 24px; }
.url i { color: #cfcfcf; }
.star { margin-left: 21px; }
.tools { display: flex; align-items: center; padding-left: 20px; }
.vsep { width: 1px; height: 20px; background: #666; margin-left: 15px; }
.favs { margin-left: 16px; }
.avatar { margin-left: 20px; }
.more { margin-left: 23px; }
.cp { margin-left: 25px; }

.page-frame { height: 919px; padding: 0 4px; background: #3b3b3b; }
.page { height: 919px; background: #0e1117; border-radius: 8px 8px 3px 3px; overflow: hidden; font-family: "Noto Sans CJK SC", "Noto Sans", sans-serif; color: #fafafa; }
.rainbow { height: 3px; background: linear-gradient(90deg, #ff4b4b, #fffd80); }
.columns { display: flex; height: 916px; }
.sidebar { width: 420px; padding: 120px 30px 0; background: #262730; display: flex; flex-direction: column; flex: none; }
.nav-title { height: 36px; line-height: 36px; font-size: 27px; display: flex; align-items: center; letter-spacing: -.5px; }
.nav-title svg { margin-right: 7px; }
.current { margin-top: 20px; height: 30px; line-height: 30px; font-size: 18px; font-weight: 400; letter-spacing: -.04px; }
.label { display: flex; align-items: center; height: 24px; line-height: 24px; font-size: 15.75px; padding-left: 3px; gap: 6.5px; letter-spacing: -.05px; }
.label span { padding-top: 1px; }
.lang { margin-top: 25px; margin-bottom: 9px; }
.radio { display: flex; align-items: center; height: 32px; font-size: 18px; line-height: 30px; gap: 10px; }
.radio span { margin-top: -2px; }
.dot { width: 20px; height: 20px; border-radius: 50%; border: 1px solid #7c7d84; }
.dot.on { border: 6px solid #ff4b4b; background: #fafafa; }
.menu { margin-top: 22px; }
.select { margin-top: 8px; height: 50px; background: #0e1117; border-radius: 10px; display: flex; align-items: center; justify-content: space-between; padding: 0 19px 0 13.5px; font-size: 18px; line-height: 26px; }
.select span { margin-top: -2px; }
.rule { width: 100%; height: 1px; border: 0; background: #4f5058; margin: 60px 0 47px; }
.alert-title { height: 30px; line-height: 30px; font-size: 20.25px; letter-spacing: -.45px; }
.threshold { margin-top: 23px; height: 24px; line-height: 24px; font-size: 15.75px; font-weight: 400; white-space: nowrap; letter-spacing: -.04px; }
.value-row { margin-top: 4px; height: 20px; font: 17.5px/20px "Liberation Mono", monospace; color: #ff4b4b; display: flex; }
.value { transform: translateX(-50%); }
.track { margin-top: 7px; height: 5px; border-radius: 3px; background: #4a4b56; display: flex; align-items: center; }
.fill { height: 5px; border-radius: 3px; background: #ff4b4b; }
.thumb { width: 15px; height: 15px; margin-left: -7.5px; border-radius: 50%; background: #ff4b4b; }
.range { margin-top: 17px; display: flex; justify-content: space-between; font: 17.5px/20px "Liberation Mono", monospace; }

.main { flex: 1; position: relative; }
.app-header { height: 66px; display: flex; align-items: center; justify-content: flex-end; padding: 18px 44px 0 0; font-size: 15.75px; line-height: 24px; gap: 31px; }
.content { width: 880px; margin-left: 303px; }
h1 { padding-top: 1px; height: 61px; line-height: 60px; font-size: 49.5px; letter-spacing: -.2px; -webkit-text-stroke: .7px #fafafa; }
.page-tabs { margin-top: 23px; width: 880px; height: 55px; border-bottom: 3px solid #262730; display: flex; gap: 20px; }
.page-tab { flex: none; height: 55px; line-height: 54px; font-size: 15.75px; white-space: nowrap; letter-spacing: -.05px; }
.page-tab.active { color: #ff4b4b; border-bottom: 3px solid #ff4b4b; }
.page-tab.faded { height: 52px; -webkit-mask-image: linear-gradient(90deg, rgba(0,0,0,.75), rgba(0,0,0,.15)); mask-image: linear-gradient(90deg, rgba(0,0,0,.75), rgba(0,0,0,.15)); }
.kb-title { margin-top: 41px; height: 50px; line-height: 50px; font-size: 40.5px; display: flex; align-items: center; white-space: nowrap; letter-spacing: -.98px; }
.kb-title svg { margin: 10px 0 0 11.5px; }
.sub { height: 40px; line-height: 40px; font-size: 31.5px; letter-spacing: -.7px; }
.add { margin-top: 32px; }
.existing { margin-top: 32px; }
.list { margin-top: 23px; display: flex; flex-direction: column; gap: 20px; }
.expander { height: 60px; border: 1px solid #3e4045; border-radius: 10px; display: flex; align-items: center; justify-content: space-between; padding: 0 25.5px 0 20px; font-size: 15.75px; line-height: 24px; letter-spacing: -.04px; }
.expander svg { margin-top: -3px; }
.scroll-thumb { position: absolute; right: 0; top: 72px; width: 6px; height: 72px; background: #6b6c70; border-radius: 0 0 3px 3px; }

.taskbar { height: 60px; display: flex; align-items: center; border-top: 1px solid #47464a; background: linear-gradient(90deg, #222 0, #232222 150px, #2a1f29 250px, #241f2e 310px, #1f2033 450px, #1b2238 620px, #202136 720px, #232031 960px, #25202c 1080px, #2c202b 1300px, #2e1f2f 1540px, #2b202c 1680px, #242323 1800px, #232323 1920px); }
.weather { display: flex; padding-left: 26px; width: 368px; }
.moon { position: relative; width: 38px; height: 40px; }
.count { position: absolute; left: 13px; top: -3px; width: 20px; height: 20px; border-radius: 50%; background: #ff99a4; color: #111; font-size: 13.5px; line-height: 20px; text-align: center; }
.temps { display: flex; flex-direction: column; margin-top: -1px; font-size: 15px; line-height: 20px; letter-spacing: -.6px; }
.soft { color: #c9c9c9; }
.search { width: 275px; height: 40px; margin-left: 17px; border-radius: 20px; background: rgba(255,255,255,.13); border: 1px solid rgba(255,255,255,.13); display: flex; align-items: center; padding: 0 5px 0 13px; }
.start, .search { position: relative; top: -.5px; }
.search span { margin-left: 12px; font-size: 17px; letter-spacing: -.6px; color: #d5d5da; line-height: 24px; }
.shelf { margin-left: auto; }
.apps { display: flex; gap: 5px; margin-left: 5px; }
.app { position: relative; width: 50px; height: 50px; border-radius: 5px; display: flex; align-items: center; justify-content: center; }
.app svg { overflow: visible; margin-top: -1px; }
.app.active { background: rgba(255,255,255,.08); box-shadow: inset 0 0 0 1px rgba(255,255,255,.05); }
.run { position: absolute; left: 21px; bottom: 1px; width: 8px; height: 4px; border-radius: 2px; background: #a09da2; }
.active .run { left: 15px; width: 20px; background: #f4806a; }
.hp-text { font: italic 700 19px "Open Sans", sans-serif; fill: #fff; letter-spacing: -1px; }
.help-text { font: 700 25px "Open Sans", sans-serif; fill: #fff; }
.o-text { font: 700 13px "Open Sans", sans-serif; fill: #fff; }
.tray { display: flex; align-items: center; margin-left: 86px; margin-top: -1px; flex: 1; padding-right: 24px; font-size: 15px; line-height: 20px; }
.cloud { margin-left: 22px; }
.sync { margin-left: 19px; }
.lang-ind { width: 40px; margin-left: 17px; display: flex; flex-direction: column; align-items: center; letter-spacing: -.3px; }
.wifi { margin-left: 17px; }
.vol { margin-left: 9px; }
.batt { margin-left: 11px; }
.clock { margin-left: auto; display: flex; flex-direction: column; align-items: flex-end; letter-spacing: -.2px; }
</style>
